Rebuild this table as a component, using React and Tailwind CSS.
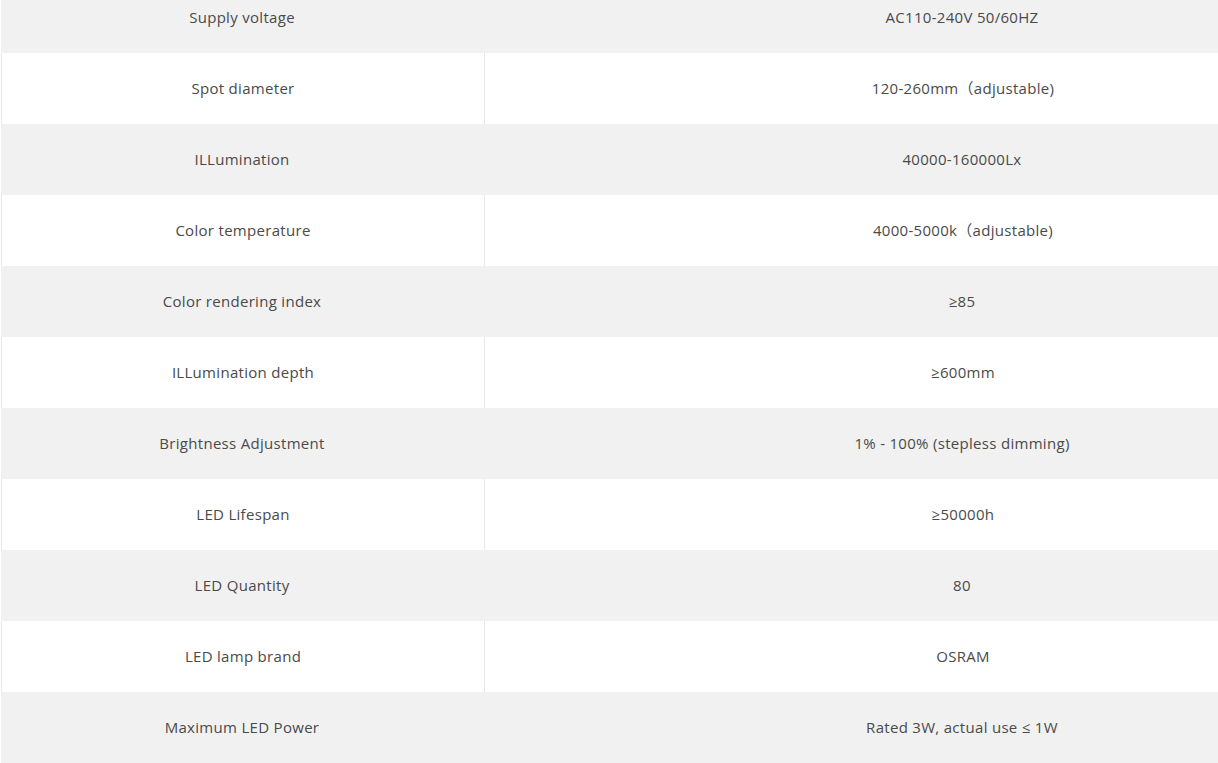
const rows = [
  ["Supply voltage", "AC110-240V 50/60HZ"],
  ["Spot diameter", "120-260mm（adjustable)"],
  ["ILLumination", "40000-160000Lx"],
  ["Color temperature", "4000-5000k（adjustable)"],
  ["Color rendering index", "≥85"],
  ["ILLumination depth", "≥600mm"],
  ["Brightness Adjustment", "1% - 100% (stepless dimming)"],
  ["LED Lifespan", "≥50000h"],
  ["LED Quantity", "80"],
  ["LED lamp brand", "OSRAM"],
  ["Maximum LED Power", "Rated 3W, actual use ≤ 1W"],
];

export default function App() {
  return (
    <div className="w-[1218px] h-[763px] overflow-hidden bg-white">
      <div
        className="mt-[-18px] ml-px w-[1440px] text-[15px] tracking-[0.3px] text-[#4a4a4a]"
        style={{ fontFamily: "'Open Sans', 'Noto Sans CJK SC', sans-serif" }}
      >
        {rows.map(([k, v], i) => (
          <div
            key={k}
            className={
              "flex h-[71px] items-center " +
              (i % 2 === 0 ? "bg-[#f1f1f1]" : "bg-white border-l border-[#e8e8e8]")
            }
          >
            <div className="w-[482px] h-full flex items-center justify-center">{k}</div>
            <div
              className={
                "flex-1 h-full flex items-center justify-center " +
                (i % 2 === 0 ? "" : "border-l border-[#e8e8e8]")
              }
            >
              {v}
            </div>
          </div>
        ))}
      </div>
    </div>
  );
}
